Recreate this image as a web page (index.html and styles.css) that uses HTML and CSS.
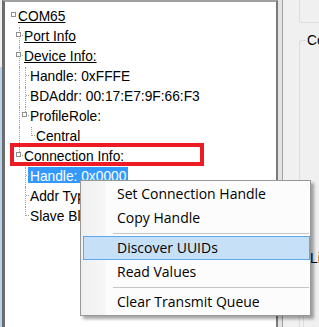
FILE: index.html
```html
<!DOCTYPE html>
<html lang="en">
<head>
    <meta charset="UTF-8">
    <meta name="viewport" content="width=device-width, initial-scale=1.0">
    <title>Device Tree</title>
    <link rel="stylesheet" href="styles.css">
</head>
<body>
    <div class="window">
        <div class="edge"></div>
        <div class="tree">
            <div class="row"><span class="gutter"><span class="box"></span></span><span class="label link">COM65</span></div>
            <div class="row"><span class="gutter"></span><span class="cell tee"><span class="box"></span></span><span class="label link">Port Info</span></div>
            <div class="row"><span class="gutter"></span><span class="cell tee"><span class="box"></span></span><span class="label link">Device Info:</span></div>
            <div class="row"><span class="gutter"></span><span class="cell pipe"></span><span class="cell tee"></span><span class="label">Handle: 0xFFFE</span></div>
            <div class="row"><span class="gutter"></span><span class="cell pipe"></span><span class="cell tee"></span><span class="label">BDAddr: 00:17:E7:9F:66:F3</span></div>
            <div class="row"><span class="gutter"></span><span class="cell pipe"></span><span class="cell elbow"><span class="box"></span></span><span class="label">ProfileRole:</span></div>
            <div class="row"><span class="gutter"></span><span class="cell pipe"></span><span class="cell"></span><span class="cell elbow"></span><span class="label">Central</span></div>
            <div class="row"><span class="gutter"></span><span class="cell elbow"><span class="box"></span></span><span class="label link">Connection Info:</span></div>
            <div class="row"><span class="gutter"></span><span class="cell"></span><span class="cell tee"></span><span class="label selected">Handle: 0x0000</span></div>
            <div class="row"><span class="gutter"></span><span class="cell"></span><span class="cell tee"></span><span class="label">Addr Type: Public</span></div>
            <div class="row"><span class="gutter"></span><span class="cell"></span><span class="cell elbow"></span><span class="label">Slave Bluetooth</span></div>
        </div>
        <div class="splitter"></div>
        <div class="panel">
            <div class="group-top"></div>
            <fieldset class="group">
                <legend>Connection</legend>
                <fieldset class="subgroup">
                    <legend>Link</legend>
                </fieldset>
            </fieldset>
        </div>
    </div>

    <div class="mark"></div>

    <div class="menu">
        <div class="item">Set Connection Handle</div>
        <div class="item">Copy Handle</div>
        <div class="sep"></div>
        <div class="item active">Discover UUIDs</div>
        <div class="item">Read Values</div>
        <div class="sep"></div>
        <div class="item">Clear Transmit Queue</div>
    </div>
</body>
</html>
```

FILE: styles.css
```css
html, body {
    margin: 0;
    height: 100%;
    overflow: hidden;
}
body {
    background-color: #f0f0f0;
    font-family: "Liberation Sans", Arial, sans-serif;
    font-size: 13.75px;
    color: #000;
}
.window {
    display: flex;
    width: 319px;
    height: 327px;
    overflow: hidden;
}
.edge {
    flex: none;
    width: 2px;
    background: linear-gradient(#f0f0f0 67px, #b9d1ea 67px);
}
.tree {
    flex: none;
    width: 271px;
    background: #fff;
    border-top: 2px solid #a0a0a0;
    border-left: 3px solid #6d6d6d;
    border-right: 2px solid #7a7a7a;
    padding-top: 5px;
    overflow: hidden;
}
.row {
    display: flex;
    align-items: flex-start;
    height: 20px;
    white-space: nowrap;
}
.gutter {
    flex: none;
    width: 6px;
    height: 20px;
    margin-left: 5px;
    position: relative;
}
.gutter .box {
    left: 1px;
}
.cell {
    flex: none;
    width: 6px;
    height: 20px;
    position: relative;
}
.pipe::before, .tee::before, .elbow::before {
    content: "";
    position: absolute;
    left: 3px;
    top: 0;
    bottom: 0;
    border-left: 1px dotted #a0a0a0;
}
.elbow::before {
    bottom: auto;
    height: 9px;
}
.tee::after, .elbow::after {
    content: "";
    position: absolute;
    left: 4px;
    top: 8px;
    width: 3px;
    border-top: 1px dotted #a0a0a0;
}
.box {
    position: absolute;
    left: 0;
    top: 5px;
    width: 5px;
    height: 5px;
    box-sizing: border-box;
    border: 1px solid #8e8e8e;
    background: #fff;
    z-index: 1;
}
.label {
    display: inline-block;
    box-sizing: border-box;
    height: 16px;
    padding: 3px 2px 0;
    line-height: 13px;
}
.link {
    text-decoration: underline;
}
.selected {
    background: #3399ff;
    color: #fff;
}
.splitter {
    flex: none;
    width: 4px;
    background: #e3e3e3;
    border-right: 1px solid #a0a0a0;
}
.panel {
    flex: 1;
    min-width: 0;
    padding-left: 16px;
    background: #f0f0f0;
}
.group-top {
    height: 22px;
    border-left: 1px solid #dcdcdc;
    border-bottom: 1px solid #dcdcdc;
    border-bottom-left-radius: 3px;
}
.group {
    margin: 10px 0 0;
    padding: 0;
    min-width: 0;
    height: 300px;
    border: 1px solid #dcdcdc;
    border-right: none;
    border-radius: 3px 0 0 3px;
    white-space: nowrap;
}
.group legend {
    padding: 0 1px;
    margin-left: 6px;
}
.subgroup {
    margin: 203px 0 0 3px;
    padding: 0;
    min-width: 0;
    height: 80px;
    border: 1px solid #dcdcdc;
    border-right: none;
    border-radius: 3px 0 0 3px;
}
.subgroup legend {
    padding: 0 0 0 1px;
    margin-left: 5px;
}
.mark {
    position: absolute;
    left: 10px;
    top: 143px;
    width: 194px;
    height: 23px;
    box-sizing: border-box;
    border: 4px solid #ed1c24;
}
.menu {
    position: absolute;
    left: 80px;
    top: 180px;
    width: 231px;
    box-sizing: border-box;
    padding: 1px 0 1px 2px;
    border: 1px solid #979797;
    background: linear-gradient(to right, #f0f0f0, #f6f6f6 24px, #fcfcfc 25px);
    box-shadow: 3px 3px 3px rgba(0, 0, 0, 0.35);
    font-family: "Open Sans", "Noto Sans", sans-serif;
    font-size: 14px;
}
.item {
    height: 24px;
    line-height: 24px;
    padding-left: 34px;
    box-sizing: border-box;
}
.item.active {
    background: #c6e0f8;
    border: 1px solid #5ea6ee;
    line-height: 22px;
    padding-left: 33px;
}
.sep {
    height: 1px;
    margin: 3px 1px 2px 30px;
    background: #c5c5c5;
}
```
